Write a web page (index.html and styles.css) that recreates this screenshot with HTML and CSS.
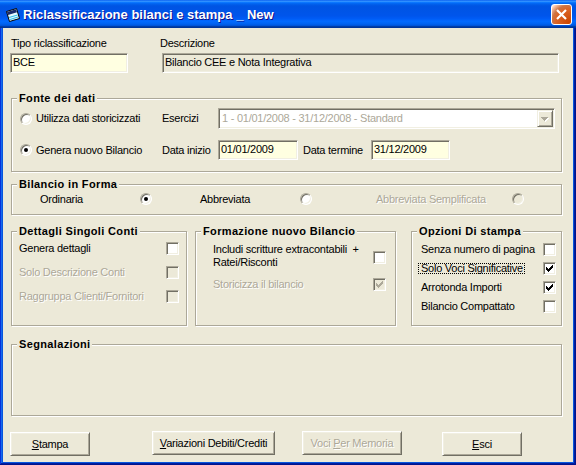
FILE: index.html
```html
<!DOCTYPE html>
<html lang="it">
<head>
<meta charset="utf-8">
<title>Riclassificazione bilanci e stampa _ New</title>
<link rel="stylesheet" href="styles.css">
</head>
<body>
<div class="window">
  <div class="titlebar">
    <svg class="appicon" width="16" height="16" viewBox="0 0 16 16">
      <path d="M1.5 4.5 L11.5 1.5 L14.5 11.5 L4.5 14.5 Z" fill="#e8fbff" stroke="#000"/>
      <path d="M2 5 L11 2.2 L12 5.2 L3 8 Z" fill="#1a2a6a"/>
      <path d="M4 10.5 L12.5 8 M5 12.5 L13 10" stroke="#36c0ea" stroke-width="1.2"/>
    </svg>
    <span class="title">Riclassificazione bilanci e stampa _ New</span>
    <div class="close">
      <svg width="19" height="19" viewBox="0 0 19 19"><path d="M5 5 L14 14 M14 5 L5 14" stroke="#fff" stroke-width="2.2"/></svg>
    </div>
  </div>

  <div class="client">
    <div class="toprow">
      <div class="field f-tipo">
        <div class="lbl">Tipo riclassificazione</div>
        <div class="edit yellow w-tipo">BCE</div>
      </div>
      <div class="field f-desc">
        <div class="lbl">Descrizione</div>
        <div class="edit ro w-desc">Bilancio CEE e Nota Integrativa</div>
      </div>
    </div>

    <fieldset class="group g-fonte">
      <legend>Fonte dei dati</legend>
      <div class="fonte-body">
        <div class="frow r1">
          <div class="opt"><span class="radio"></span><span>Utilizza dati storicizzati</span></div>
          <span class="flbl">Esercizi</span>
          <div class="combo">
            <span class="ctext">1 - 01/01/2008 - 31/12/2008 - Standard</span>
            <span class="dd">
              <svg width="14" height="15" viewBox="0 0 14 15">
                <path d="M4 7h7v1H4z M5 8h5v1H5z M6 9h3v1H6z M7 10h1v1H7z" fill="#fff"/>
                <path d="M3 6h7v1H3z M4 7h5v1H4z M5 8h3v1H5z M6 9h1v1H6z" fill="#ACA899"/>
              </svg>
            </span>
          </div>
        </div>
        <div class="frow r2">
          <div class="opt"><span class="radio on"></span><span>Genera nuovo Bilancio</span></div>
          <span class="flbl">Data inizio</span>
          <div class="edit yellow w-date">01/01/2009</div>
          <span class="flbl2">Data termine</span>
          <div class="edit yellow w-date2">31/12/2009</div>
        </div>
      </div>
    </fieldset>

    <fieldset class="group g-forma">
      <legend>Bilancio in Forma</legend>
      <div class="forma-body">
        <span>Ordinaria</span><span class="radio on"></span>
        <span>Abbreviata</span><span class="radio"></span>
        <span class="dis">Abbreviata Semplificata</span><span class="radio disr"></span>
      </div>
    </fieldset>

    <div class="lower">
      <fieldset class="group g-dett">
        <legend>Dettagli Singoli Conti</legend>
        <div class="rows dett-body">
          <div class="crow"><span>Genera dettagli</span><span class="chk"></span></div>
          <div class="crow"><span class="dis">Solo Descrizione Conti</span><span class="chk disc"></span></div>
          <div class="crow"><span class="dis">Raggruppa Clienti/Fornitori</span><span class="chk disc"></span></div>
        </div>
      </fieldset>

      <fieldset class="group g-form">
        <legend>Formazione nuovo Bilancio</legend>
        <div class="rows form-body">
          <div class="crow two"><span>Includi scritture extracontabili&nbsp; +<br>Ratei/Risconti</span><span class="chk"></span></div>
          <div class="crow"><span class="dis">Storicizza il bilancio</span><span class="chk disc"><svg width="11" height="11" viewBox="0 0 11 11"><path d="M2 4h1v3H2z M3 5h1v3H3z M4 6h1v3H4z M5 5h1v3H5z M6 4h1v3H6z M7 3h1v3H7z M8 2h1v3H8z" fill="#ACA899"/></svg></span></div>
        </div>
      </fieldset>

      <fieldset class="group g-opz">
        <legend>Opzioni Di stampa</legend>
        <div class="rows opz-body">
          <div class="crow"><span>Senza numero di pagina</span><span class="chk"></span></div>
          <div class="crow"><span class="focus">Solo Voci Significative</span><span class="chk"><svg width="11" height="11" viewBox="0 0 11 11"><path d="M2 4h1v3H2z M3 5h1v3H3z M4 6h1v3H4z M5 5h1v3H5z M6 4h1v3H6z M7 3h1v3H7z M8 2h1v3H8z" fill="#000"/></svg></span></div>
          <div class="crow"><span>Arrotonda Importi</span><span class="chk"><svg width="11" height="11" viewBox="0 0 11 11"><path d="M2 4h1v3H2z M3 5h1v3H3z M4 6h1v3H4z M5 5h1v3H5z M6 4h1v3H6z M7 3h1v3H7z M8 2h1v3H8z" fill="#000"/></svg></span></div>
          <div class="crow"><span>Bilancio Compattato</span><span class="chk"></span></div>
        </div>
      </fieldset>
    </div>

    <fieldset class="group g-segn">
      <legend>Segnalazioni</legend>
    </fieldset>

    <div class="buttons">
      <div class="btn b-stampa"><span><u>S</u>tampa</span></div>
      <div class="btn b-var"><span><u>V</u>ariazioni Debiti/Crediti</span></div>
      <div class="btn b-voci dis"><span>Voci <u>P</u>er Memoria</span></div>
      <div class="btn b-esci"><span><u>E</u>sci</span></div>
    </div>
  </div>
</div>
</body>
</html>
```

FILE: styles.css
```css
* { box-sizing: border-box; }
html, body { margin: 0; padding: 0; }
body {
  width: 576px;
  height: 465px;
  overflow: hidden;
  background: #fff;
  font-family: "Liberation Sans", Arial, sans-serif;
  font-size: 11px;
  line-height: 13px;
  letter-spacing: -0.25px;
  color: #000;
}

.window {
  width: 576px;
  height: 465px;
  display: flex;
  flex-direction: column;
  background: #0855DD;
  box-shadow: inset -1px -1px #00138c, inset 1px 1px #0831d9, inset -2px -2px #001ea0, inset 2px 2px #166aee;
}

/* title bar */
.titlebar {
  height: 28px;
  flex: none;
  display: flex;
  align-items: center;
  padding: 2px 4px 0 5px;
  background: linear-gradient(180deg, #0058ee 0%, #3a93ff 4%, #288eff 6%, #127dff 8%, #036ffc 10%, #0262ee 14%, #0057e5 20%, #0054e3 24%, #0055eb 56%, #005bf5 66%, #026afe 76%, #0062ef 86%, #0052d6 92%, #0040ab 94%, #003092 100%);
}
.appicon { flex: none; display: block; margin-right: 2px; }
.title {
  color: #fff;
  font-weight: bold;
  font-size: 13px;
  line-height: 16px;
  letter-spacing: 0;
  text-shadow: 1px 1px #0f1089;
}
.close {
  margin-left: auto;
  width: 21px;
  height: 21px;
  border: 1px solid #fff;
  border-radius: 3px;
  background: radial-gradient(circle at 90% 90%, #cc4600 0%, #dc6527 55%, #cd7546 70%, #ffccb2 90%, #fff 100%);
  display: flex;
  align-items: center;
  justify-content: center;
  margin-bottom: 2px;
}
.close svg { display: block; }

/* client */
.client {
  flex: 1;
  margin: 0 3px 3px 3px;
  background: #ECE9D8;
  padding: 9px 0 0 8px;
  display: flex;
  flex-direction: column;
}

.toprow { display: flex; align-items: flex-start; }
.field { display: flex; flex-direction: column; }
.f-tipo .edit { margin-left: -1px; }
.f-desc { margin-left: 32px; }
.f-desc .edit { margin-left: 2px; }
.lbl { height: 13px; margin-bottom: 3px; white-space: nowrap; }

.edit {
  height: 20px;
  border: 1px solid;
  border-color: #ACA899 #fff #fff #ACA899;
  box-shadow: inset 1px 1px 0 #716F64, inset -1px -1px 0 #F1EFE2;
  padding: 1px 1px 0 2px;
  line-height: 14px;
  white-space: nowrap;
  overflow: visible;
}
.yellow { background: #FFFFE1; }
.ro { background: #ECE9D8; }
.w-tipo { width: 118px; }
.w-desc { width: 397px; }
.w-date { width: 80px; }
.w-date2 { width: 79px; }

/* group boxes */
fieldset.group {
  margin: 0;
  padding: 0;
  min-width: 0;
  border: 1px solid #ACA899;
  box-shadow: 1px 1px 0 #fff, inset 1px 1px 0 #fff;
}
.group legend {
  margin-left: 5px;
  padding: 0 2px;
  font-weight: bold;
  letter-spacing: 0.35px;
  line-height: 13px;
  background: #ECE9D8;
}

.g-fonte { width: 551px; margin-top: 19px !important; }
.fonte-body { padding: 3px 0 11px 8px; display: flex; flex-direction: column; gap: 11px; }
.frow { display: flex; align-items: center; }
.r1 { height: 21px; }
.r2 { height: 20px; }
.opt { width: 142px; display: flex; align-items: center; gap: 4px; white-space: nowrap; }
.flbl { width: 56px; white-space: nowrap; }
.flbl2 { width: 68px; margin-left: 5px; white-space: nowrap; }

.combo {
  width: 337px;
  height: 21px;
  border: 1px solid;
  border-color: #ACA899 #fff #fff #ACA899;
  box-shadow: inset 1px 1px 0 #716F64, inset -1px -1px 0 #F1EFE2;
  background: #fff;
  padding: 1px;
  display: flex;
  align-items: center;
}
.ctext { flex: 1; padding-left: 2px; color: #ACA899; white-space: nowrap; line-height: 17px; }
.dd {
  width: 16px;
  height: 17px;
  border: 1px solid;
  border-color: #F1EFE2 #716F64 #716F64 #F1EFE2;
  box-shadow: inset 1px 1px 0 #fff, inset -1px -1px 0 #ACA899;
  background: #ECE9D8;
  display: block;
}
.dd svg { display: block; }

.radio {
  flex: none;
  width: 12px;
  height: 12px;
  border-radius: 50%;
  background: #fff;
  border: 1px solid;
  border-color: #ACA899 #fff #fff #ACA899;
  box-shadow: inset 1px 1px 0 #716F64, inset -1px -1px 0 #F1EFE2;
  display: flex;
  align-items: center;
  justify-content: center;
}
.radio.on::after {
  content: "";
  width: 4px;
  height: 4px;
  border-radius: 50%;
  background: #000;
}
.radio.disr { background: #ECE9D8; }

.g-forma { width: 551px; margin-top: 6px !important; }
.forma-body {
  height: 16px;
  margin-bottom: 7px;
  padding-left: 28px;
  display: grid;
  grid-template-columns: 100px 60px 100px 76px 136px 13px;
  align-items: center;
  white-space: nowrap;
}

.dis { color: #ACA899; text-shadow: 1px 1px 0 #fff; }

/* lower boxes */
.lower { display: flex; margin-top: 10px; }
.g-dett { width: 176px; height: 101px; }
.g-form { width: 201px; height: 101px; margin-left: 8px !important; }
.g-opz { width: 151px; height: 101px; margin-left: 15px !important; }

.rows { display: flex; flex-direction: column; }
.crow { display: flex; align-items: center; justify-content: space-between; min-height: 13px; white-space: nowrap; }
.dett-body { padding: 4px 7px 0 7px; gap: 11px; }
.form-body { padding: 5px 9px 0 17px; gap: 9px; }
.form-body .two { align-items: flex-start; }
.form-body .two .chk { margin-top: 8px; }
.opz-body { padding: 5px 5px 0 9px; gap: 6px; }

.chk {
  flex: none;
  width: 13px;
  height: 13px;
  background: #fff;
  border: 1px solid;
  border-color: #ACA899 #fff #fff #ACA899;
  box-shadow: inset 1px 1px 0 #716F64, inset -1px -1px 0 #F1EFE2;
}
.chk svg { display: block; }
.chk.disc { background: #ECE9D8; }

.focus {
  display: inline-block;
  margin-left: -3px;
  padding: 0 1px 0 2px;
  border: 1px dotted #000;
  line-height: 9px;
  height: 11px;
}

.g-segn { width: 551px; height: 78px; margin-top: 12px !important; }

/* buttons */
.buttons { display: flex; align-items: flex-start; margin-top: 15px; margin-left: -1px; }
.btn {
  height: 24px;
  border: 1px solid;
  border-color: #fff #716F64 #716F64 #fff;
  box-shadow: inset 1px 1px 0 #F1EFE2, inset -1px -1px 0 #ACA899;
  background: #ECE9D8;
  display: flex;
  align-items: center;
  justify-content: center;
  white-space: nowrap;
}
.b-stampa { width: 80px; margin-top: 1px; }
.b-var { width: 123px; margin-left: 62px; }
.b-voci { width: 100px; margin-left: 27px; }
.b-esci { width: 80px; margin-left: 40px; margin-top: 1px; }
```
